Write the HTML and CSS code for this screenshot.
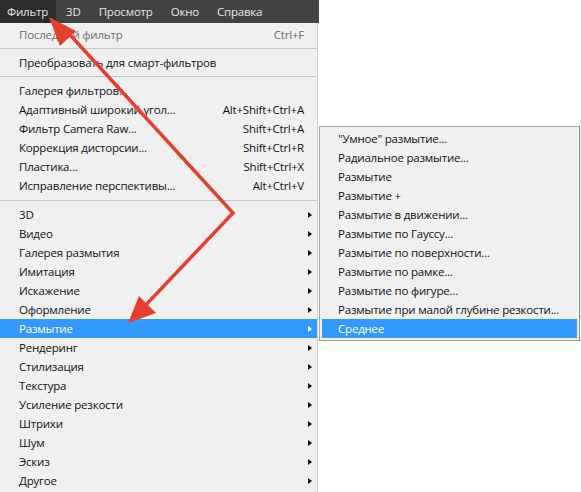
FILE: index.html
```html
<!DOCTYPE html>
<html lang="ru">
<head>
<meta charset="utf-8">
<title>Фильтр</title>
<link rel="stylesheet" href="styles.css">
</head>
<body>
<div class="screen">
  <div class="menubar">
    <span class="mb-item active">Фильтр</span>
    <span class="mb-item">3D</span>
    <span class="mb-item">Просмотр</span>
    <span class="mb-item">Окно</span>
    <span class="mb-item">Справка</span>
  </div>
  <div class="menu">
    <div class="row disabled"><span class="label">Последний фильтр</span><span class="key">Ctrl+F</span><span class="cell"></span></div>
    <div class="sep"></div>
    <div class="row"><span class="label">Преобразовать для смарт-фильтров</span><span class="cell"></span></div>
    <div class="sep"></div>
    <div class="row"><span class="label">Галерея фильтров...</span><span class="cell"></span></div>
    <div class="row"><span class="label">Адаптивный широкий угол...</span><span class="key">Alt+Shift+Ctrl+A</span><span class="cell"></span></div>
    <div class="row"><span class="label">Фильтр Camera Raw...</span><span class="key">Shift+Ctrl+A</span><span class="cell"></span></div>
    <div class="row"><span class="label">Коррекция дисторсии...</span><span class="key">Shift+Ctrl+R</span><span class="cell"></span></div>
    <div class="row"><span class="label">Пластика...</span><span class="key">Shift+Ctrl+X</span><span class="cell"></span></div>
    <div class="row"><span class="label">Исправление перспективы...</span><span class="key">Alt+Ctrl+V</span><span class="cell"></span></div>
    <div class="sep sep-wide"></div>
    <div class="row"><span class="label">3D</span><span class="cell"><i class="tri"></i></span></div>
    <div class="row"><span class="label">Видео</span><span class="cell"><i class="tri"></i></span></div>
    <div class="row"><span class="label">Галерея размытия</span><span class="cell"><i class="tri"></i></span></div>
    <div class="row"><span class="label">Имитация</span><span class="cell"><i class="tri"></i></span></div>
    <div class="row"><span class="label">Искажение</span><span class="cell"><i class="tri"></i></span></div>
    <div class="row"><span class="label">Оформление</span><span class="cell"><i class="tri"></i></span></div>
    <div class="row selected"><span class="label">Размытие</span><span class="cell"><i class="tri"></i></span></div>
    <div class="row"><span class="label">Рендеринг</span><span class="cell"><i class="tri"></i></span></div>
    <div class="row"><span class="label">Стилизация</span><span class="cell"><i class="tri"></i></span></div>
    <div class="row"><span class="label">Текстура</span><span class="cell"><i class="tri"></i></span></div>
    <div class="row"><span class="label">Усиление резкости</span><span class="cell"><i class="tri"></i></span></div>
    <div class="row"><span class="label">Штрихи</span><span class="cell"><i class="tri"></i></span></div>
    <div class="row"><span class="label">Шум</span><span class="cell"><i class="tri"></i></span></div>
    <div class="row"><span class="label">Эскиз</span><span class="cell"><i class="tri"></i></span></div>
    <div class="row"><span class="label">Другое</span><span class="cell"><i class="tri"></i></span></div>
  </div>
  <div class="submenu">
    <div class="row"><span class="label">"Умное" размытие...</span></div>
    <div class="row"><span class="label">Радиальное размытие...</span></div>
    <div class="row"><span class="label">Размытие</span></div>
    <div class="row"><span class="label">Размытие +</span></div>
    <div class="row"><span class="label">Размытие в движении...</span></div>
    <div class="row"><span class="label">Размытие по Гауссу...</span></div>
    <div class="row"><span class="label">Размытие по поверхности...</span></div>
    <div class="row"><span class="label">Размытие по рамке...</span></div>
    <div class="row"><span class="label">Размытие по фигуре...</span></div>
    <div class="row"><span class="label">Размытие при малой глубине резкости...</span></div>
    <div class="row selected"><span class="label">Среднее</span></div>
  </div>
  <svg class="arrows" width="581" height="492" viewBox="0 0 581 492">
    <polyline points="62,26 233,213 142,309" fill="none" stroke="#e5402e" stroke-width="3.5" stroke-linejoin="miter" stroke-linecap="round"/>
    <polygon points="49,17 76,31 60,46" fill="#e5402e"/>
    <polygon points="128,323 139,296 156,313" fill="#e5402e"/>
  </svg>
</div>
</body>
</html>
```
FILE: styles.css
```css
html, body {
  margin: 0;
  padding: 0;
  background: #ffffff;
}

.screen {
  position: relative;
  width: 581px;
  height: 492px;
  overflow: hidden;
  background: #ffffff;
  font-family: "Open Sans", "Noto Sans", sans-serif;
  font-size: 11.5px;
  letter-spacing: -0.2px;
  color: #111111;
}

.menubar {
  width: 319px;
  height: 23px;
  background: #434343;
  display: flex;
  align-items: stretch;
}

.mb-item {
  display: flex;
  align-items: center;
  padding: 0 9px;
  color: #e6e6e6;
}

.mb-item.active {
  background: #2c2c2c;
  padding: 0 8px 0 7px;
  margin-right: 1px;
}

.menu {
  width: 318px;
  height: 469px;
  padding-top: 2px;
  box-sizing: border-box;
  background: #f0f0f0;
  border-right: 1px solid #d2d2d2;
}

.row {
  height: 19px;
  display: flex;
  align-items: center;
  padding-left: 19px;
  white-space: nowrap;
}

.row .label {
  flex: 1;
}

.row .key {
  text-align: right;
}

.row .cell {
  width: 13px;
  display: flex;
  align-items: center;
  padding-left: 4px;
  box-sizing: border-box;
}

.tri {
  display: block;
  width: 0;
  height: 0;
  border-left: 4px solid #000000;
  border-top: 3.5px solid transparent;
  border-bottom: 3.5px solid transparent;
}

.row.disabled {
  color: #6f6f6f;
}

.row.selected {
  background: #3399ff;
  color: #ffffff;
}

.row.selected .tri {
  border-left-color: #ffffff;
}

.sep {
  height: 9px;
  display: flex;
  align-items: center;
}

.sep::before {
  content: "";
  display: block;
  width: 100%;
  height: 1px;
  background: #c4c4c4;
}

.sep-wide {
  height: 10px;
}

.submenu {
  position: absolute;
  left: 319px;
  top: 126px;
  width: 261px;
  padding: 2px;
  box-sizing: border-box;
  background: #f0f0f0;
  border: 1px solid #a8a8a8;
  border-right-color: #8a8a8a;
  border-bottom-color: #9a9a9a;
}

.submenu .row {
  padding-left: 16px;
}

.arrows {
  position: absolute;
  left: 0;
  top: 0;
  pointer-events: none;
}
```
